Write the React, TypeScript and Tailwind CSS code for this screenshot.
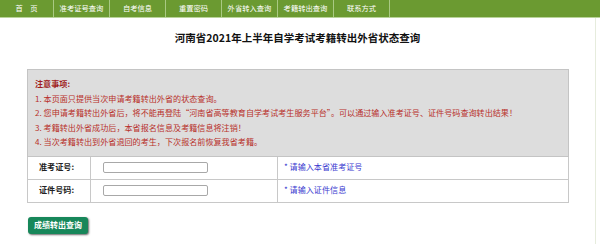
import React from "react";

const navItems = ["首　页", "准考证号查询", "自考信息", "重置密码", "外省转入查询", "考籍转出查询", "联系方式"];

export default function App() {
  const font = { fontFamily: '"Noto Sans CJK SC", "Noto Sans", sans-serif' };
  return (
    <div className="w-[600px] h-[244px] bg-white overflow-hidden" style={font}>
      <div className="h-[18px] bg-[#6b9a31] border-b border-[#b9d39a] flex">
        {navItems.map((t, i) => (
          <div
            key={t}
            className={`${i === 0 ? "w-[54px]" : "w-[56px]"} h-full flex items-center justify-center text-white text-[7.3px] border-r border-[#a9c983]`}
          >
            {t}
          </div>
        ))}
      </div>
      <div className="w-[596px] h-[226px] border-r border-[#e6ecdd]">
        <div className="pt-[13px] h-[51px] text-center font-bold text-[10.5px] text-[#111] leading-[14px]">
          河南省2021年上半年自学考试考籍转出外省状态查询
        </div>
        <div className="ml-[27px] w-[542px] bg-[#dddddd] border border-[#c4c4c4] pt-[7px] pb-[6px] px-[7px] text-[8.1px] leading-[14.5px] text-[#b8302a]">
          <div className="font-bold text-[#a11d1d]">注意事项:</div>
          <div>1. 本页面只提供当次申请考籍转出外省的状态查询。</div>
          <div>2. 您申请考籍转出外省后，将不能再登陆“河南省高等教育自学考试考生服务平台”。可以通过输入准考证号、证件号码查询转出结果！</div>
          <div>3. 考籍转出外省成功后，本省报名信息及考籍信息将注销！</div>
          <div>4. 当次考籍转出到外省退回的考生，下次报名前恢复我省考籍。</div>
        </div>
        <div className="ml-[27px] w-[542px] border-x border-b border-[#c8c8c8] text-[8.1px]">
          <div className="flex h-[23px] border-b border-[#c8c8c8]">
            <div className="w-[63px] border-r border-[#c8c8c8] flex items-center pl-[11px] font-bold text-[#222]">准考证号:</div>
            <div className="w-[187px] border-r border-[#c8c8c8] flex items-center pl-[12px]">
              <div className="w-[105px] h-[11px] border border-[#a8a8a8] rounded-[2px] bg-white"></div>
            </div>
            <div className="flex-1 flex items-center pl-[6px] text-[#3b3bd0]">* 请输入本省准考证号</div>
          </div>
          <div className="flex h-[22px]">
            <div className="w-[63px] border-r border-[#c8c8c8] flex items-center pl-[11px] font-bold text-[#222]">证件号码:</div>
            <div className="w-[187px] border-r border-[#c8c8c8] flex items-center pl-[12px]">
              <div className="w-[105px] h-[11px] border border-[#a8a8a8] rounded-[2px] bg-white"></div>
            </div>
            <div className="flex-1 flex items-center pl-[6px] text-[#3b3bd0]">* 请输入证件信息</div>
          </div>
        </div>
        <div className="ml-[28px] mt-[14px] w-[60px] h-[17px] rounded-[3px] bg-[#17875a] shadow-[1px_1px_2px_rgba(0,0,0,0.6)] flex items-center justify-center text-white font-bold text-[8px]">
          成绩转出查询
        </div>
      </div>
    </div>
  );
}
